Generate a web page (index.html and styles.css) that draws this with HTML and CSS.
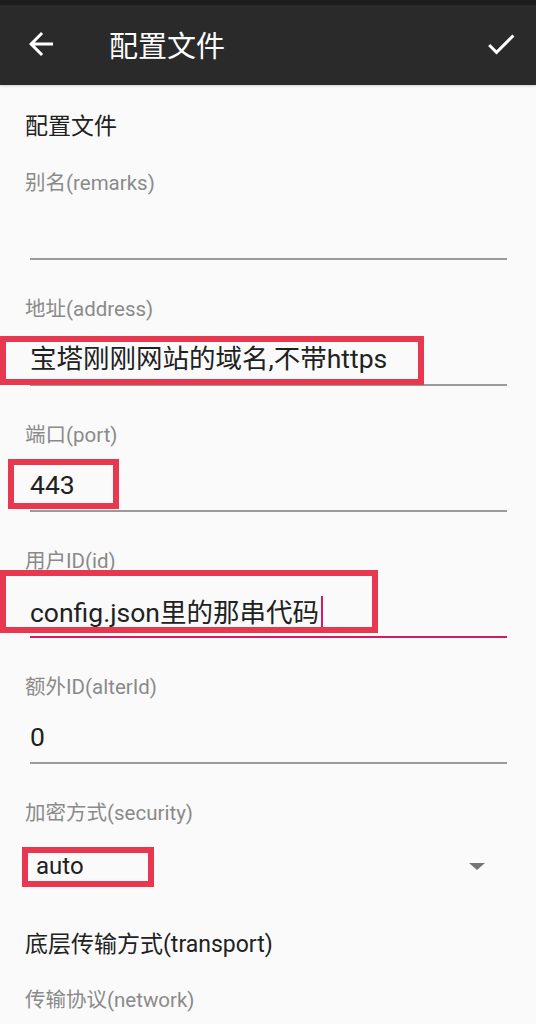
FILE: index.html
```html
<!DOCTYPE html>
<html lang="zh-CN">

<head>
  <meta charset="UTF-8">
  <meta name="viewport" content="width=device-width, initial-scale=1.0">
  <title>配置文件</title>

  <link rel="stylesheet" href="styles.css">
</head>

<body>
  <header class="toolbar">
    <svg class="toolbar-icon" viewBox="0 0 24 24" aria-hidden="true">
      <path d="M20 11H7.83l5.59-5.59L12 4l-8 8 8 8 1.41-1.41L7.83 13H20v-2z" />
    </svg>
    <h1 class="toolbar-title">配置文件</h1>
    <svg class="toolbar-icon toolbar-save" viewBox="0 0 24 24" aria-hidden="true">
      <path d="M9 16.17L4.83 12l-1.42 1.41L9 19 21 7l-1.41-1.41z" />
    </svg>
  </header>

  <main class="form">
    <h2 class="section-title">配置文件</h2>

    <div class="field">
      <label class="field-label">别名(remarks)</label>
      <div class="field-input"></div>
    </div>

    <div class="field">
      <label class="field-label">地址(address)</label>
      <div class="field-input">
        宝塔刚刚网站的域名,不带https
        <span class="mark mark-address"></span>
      </div>
    </div>

    <div class="field">
      <label class="field-label">端口(port)</label>
      <div class="field-input">
        443
        <span class="mark mark-port"></span>
      </div>
    </div>

    <div class="field">
      <label class="field-label">用户ID(id)</label>
      <div class="field-input focused">
        config.json里的那串代码<span class="cursor"></span>
        <span class="mark mark-id"></span>
      </div>
    </div>

    <div class="field">
      <label class="field-label">额外ID(alterId)</label>
      <div class="field-input">0</div>
    </div>

    <div class="field">
      <label class="field-label">加密方式(security)</label>
      <div class="select">
        <span class="select-value">auto</span>
        <span class="caret"></span>
        <span class="mark mark-security"></span>
      </div>
    </div>

    <h2 class="section-title transport">底层传输方式(transport)</h2>

    <div class="field">
      <label class="field-label">传输协议(network)</label>
    </div>
  </main>
</body>

</html>
```

FILE: styles.css
```css
body {
  background: #fafafa;
  color: #212121;
  font-family: Roboto, "Noto Sans CJK SC", sans-serif;
  margin: 0;
  overflow: hidden;
}

.toolbar {
  align-items: center;
  background: #2a2a2a;
  border-top: 5px solid #1c1c1c;
  box-shadow: 0 1px 2px rgba(0, 0, 0, 0.18);
  box-sizing: border-box;
  display: flex;
  height: 85px;
  padding: 0 17px 2px 23px;
}

.toolbar-icon {
  fill: #fff;
  height: 36px;
  width: 36px;
}

.toolbar-title {
  color: #fff;
  flex: 1;
  font-size: 29px;
  font-weight: 400;
  margin: 0 0 0 50px;
}

.form {
  padding: 27px 29px 0 25px;
}

.section-title {
  font-size: 23px;
  font-weight: 400;
  line-height: 30px;
  margin: 0 0 29px;
}

.section-title.transport {
  margin: 46px 0 28px;
}

.field {
  margin-bottom: 37px;
}

.field-label {
  color: #8a8a8a;
  display: block;
  font-size: 20.5px;
  line-height: 24px;
}

.field-input {
  border-bottom: 2px solid #9a9a9a;
  font-size: 26.5px;
  height: 30px;
  line-height: 30px;
  margin: 23px 0 0 5px;
  padding-bottom: 10px;
  position: relative;
}

.field-input.focused {
  border-bottom-color: #d81b60;
  line-height: 25px;
}

.cursor {
  background: #d81b60;
  display: inline-block;
  height: 35px;
  margin-left: 2px;
  vertical-align: -9px;
  width: 2px;
}

.select {
  align-items: center;
  display: flex;
  font-size: 24px;
  height: 36px;
  justify-content: space-between;
  margin-top: 23px;
  padding: 0 22px 0 11px;
  position: relative;
}

.caret {
  border-left: 8px solid transparent;
  border-right: 8px solid transparent;
  border-top: 7px solid #757575;
}

/* red annotation boxes drawn over the screenshot */
.mark {
  border: 6px solid #e8384f;
  box-sizing: border-box;
  position: absolute;
}

.mark-address {
  height: 49px;
  left: -30px;
  top: -8px;
  width: 424px;
}

.mark-port {
  height: 50px;
  left: -22px;
  top: -11px;
  width: 111px;
}

.mark-id {
  height: 63px;
  left: -30px;
  top: -26px;
  width: 378px;
}

.mark-security {
  height: 40px;
  left: -3px;
  top: -1px;
  width: 132px;
}
```
